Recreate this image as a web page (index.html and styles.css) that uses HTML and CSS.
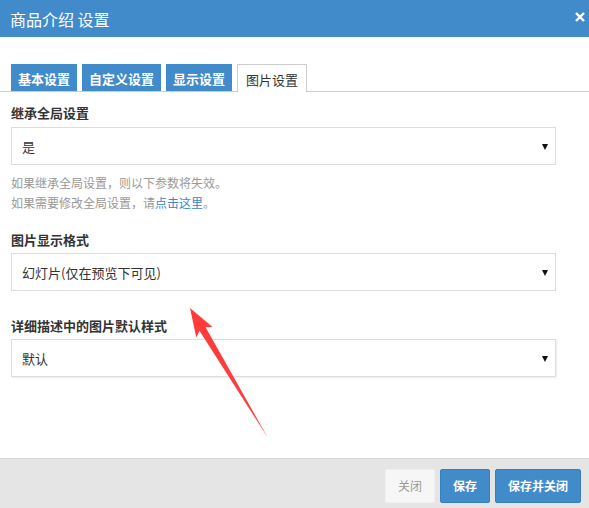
FILE: index.html
```html
<!DOCTYPE html>
<html>
<head>
<meta charset="utf-8">
<link rel="stylesheet" href="styles.css">
</head>
<body>
<div class="dialog">
  <div class="header">
    <span class="title">商品介绍 设置</span>
    <svg class="close" width="10" height="10" viewBox="0 0 10 10"><path d="M1 1L9 9M9 1L1 9" stroke="#fff" stroke-width="2.4"/></svg>
  </div>
  <div class="content">
    <div class="tabs">
      <div class="tab">基本设置</div>
      <div class="tab">自定义设置</div>
      <div class="tab">显示设置</div>
      <div class="tab active">图片设置</div>
    </div>
    <div class="form">
      <div class="label l1">继承全局设置</div>
      <div class="select"><span>是</span><i class="caret"></i></div>
      <div class="help">如果继承全局设置，则以下参数将失效。<br>如果需要修改全局设置，请<a class="link">点击这里</a>。</div>
      <div class="label l2">图片显示格式</div>
      <div class="select"><span>幻灯片(仅在预览下可见)</span><i class="caret"></i></div>
      <div class="label l3">详细描述中的图片默认样式</div>
      <div class="select shadow"><span>默认</span><i class="caret"></i></div>
    </div>
  </div>
  <div class="footer">
    <div class="btn btn-light">关闭</div>
    <div class="btn btn-primary">保存</div>
    <div class="btn btn-primary">保存并关闭</div>
  </div>
  <svg class="arrow" width="589" height="508" viewBox="0 0 589 508">
    <polygon points="190,308 212.5,327 205.6,327.2 268,438 199.6,331 196.2,337.2" fill="#ff3c3c"/>
  </svg>
</div>
</body>
</html>
```
FILE: styles.css
```css
* { box-sizing: border-box; }
html, body { margin: 0; padding: 0; }
body {
  width: 589px;
  height: 508px;
  overflow: hidden;
  background: #fff;
  font-family: "Noto Sans CJK SC", "Noto Sans", sans-serif;
  font-size: 13px;
  color: #333;
}
.dialog {
  position: relative;
  width: 589px;
  height: 508px;
  display: flex;
  flex-direction: column;
}
.header {
  height: 37px;
  background: #418bca;
  color: #fff;
  display: flex;
  align-items: center;
  justify-content: space-between;
  padding: 0 4px 0 10px;
}
.title { font-size: 16px; line-height: 20px; }
.close { margin-top: -3px; }
.content { flex: 1; padding-top: 27px; }
.tabs {
  display: flex;
  gap: 5px;
  padding-left: 11px;
  height: 28px;
  border-bottom: 1px solid #ccc;
}
.tab {
  height: 27px;
  padding: 0 7px;
  background: #418bca;
  color: #fff;
  font-weight: bold;
  font-size: 13px;
  line-height: 29px;
  white-space: nowrap;
}
.tab.active {
  height: 28px;
  background: #fff;
  color: #333;
  font-weight: normal;
  border: 1px solid #ccc;
  border-bottom: none;
  margin-bottom: -1px;
  padding: 0 8px;
  line-height: 30px;
}
.form { padding: 0 33px 0 11px; }
.label {
  font-weight: bold;
  line-height: 20px;
  color: #333;
}
.l1 { margin-top: 11px; margin-bottom: 4px; }
.l2 { margin-top: 17px; margin-bottom: 3px; }
.l3 { margin-top: 25px; margin-bottom: 3px; }
.select {
  height: 38px;
  border: 1px solid #ddd;
  display: flex;
  align-items: center;
  justify-content: space-between;
  padding: 0 7px 0 10px;
  color: #333;
}
.select.shadow { box-shadow: 1px 1px 2px rgba(0,0,0,0.08); }
.caret {
  width: 0;
  height: 0;
  border-left: 3.5px solid transparent;
  border-right: 3.5px solid transparent;
  border-top: 6px solid #111;
  margin-top: 1px;
}
.help {
  margin-top: 8px;
  font-size: 12px;
  line-height: 20px;
  color: #999;
}
.link { color: #3a86c8; }
.footer {
  height: 50px;
  background: #e5e5e5;
  border-top: 1px solid #d6d6d6;
  display: flex;
  justify-content: flex-end;
  align-items: flex-start;
  gap: 5px;
  padding: 10px 8px 0 0;
}
.btn {
  height: 34px;
  line-height: 32px;
  border-radius: 2px;
  text-align: center;
  font-size: 12px;
  border: 1px solid transparent;
}
.btn-light {
  width: 50px;
  background: #f6f6f6;
  color: #999;
  border-color: #f0f0f0;
}
.btn-primary {
  background: #418bca;
  color: #fff;
  font-weight: bold;
  border-color: #3a7fba;
}
.btn-primary:nth-child(2) { width: 50px; }
.btn-primary:nth-child(3) { width: 86px; }
.arrow { position: absolute; left: 0; top: 0; pointer-events: none; }
```
